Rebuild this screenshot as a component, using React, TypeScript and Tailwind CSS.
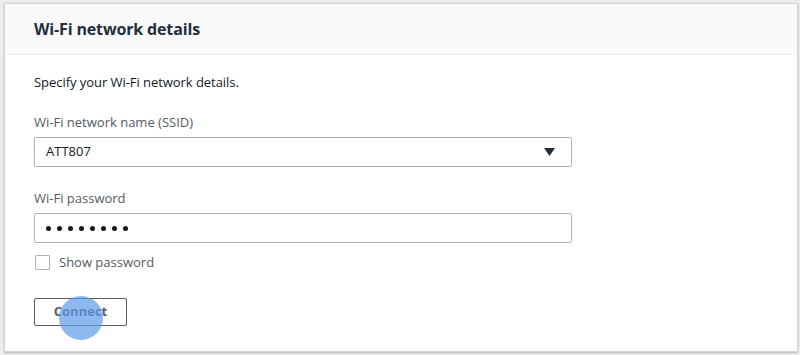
import React from "react";

export default function App() {
  return (
    <div
      className="w-[800px] h-[355px] bg-[#eeeeee] pt-[3px] pl-[4px] pr-[2px]"
      style={{ fontFamily: '"Open Sans", "Noto Sans", sans-serif' }}
    >
      <div className="w-[794px] h-[349px] bg-white border border-[#d5d5d5] shadow-[0_1px_2px_rgba(0,0,0,0.25)] flex flex-col">
        <div className="h-[51px] bg-[#fafafa] border-b border-[#eaeded] flex items-center pl-[29px]">
          <span className="text-[16px] font-bold text-[#232f3e] tracking-[-0.15px]">Wi-Fi network details</span>
        </div>
        <div className="pl-[29px] pt-[17px] flex flex-col text-[#16191f]">
          <p className="text-[13px] leading-[20px] tracking-[-0.05px]">Specify your Wi-Fi network details.</p>
          <label className="mt-[20px] text-[13px] leading-[20px] text-[#545b64]">Wi-Fi network name (SSID)</label>
          <div className="mt-[5px] w-[538px] h-[30px] border border-[#aab7b8] rounded-[2px] flex items-center justify-between pl-[11px] pr-[16px]">
            <span className="text-[13px] text-[#16191f]">ATT807</span>
            <svg width="11" height="8" viewBox="0 0 11 8">
              <path d="M0 0 L11 0 L5.5 8 Z" fill="#232f3e" />
            </svg>
          </div>
          <label className="mt-[21px] text-[13px] leading-[20px] text-[#545b64]">Wi-Fi password</label>
          <div className="mt-[5px] w-[538px] h-[30px] border border-[#aab7b8] rounded-[2px] flex items-center pl-[11px] gap-[6px]">
            {Array.from({ length: 8 }).map((_, i) => (
              <span key={i} className="w-[5px] h-[5px] rounded-full bg-[#16191f]" />
            ))}
          </div>
          <div className="mt-[10px] flex items-center gap-[9px]">
            <span className="w-[15px] h-[15px] border border-[#aab7b8] rounded-[1px] bg-white ml-[1px]" />
            <span className="text-[13px] text-[#545b64]">Show password</span>
          </div>
          <div className="mt-[25px] relative w-[93px] h-[28px]">
            <button className="w-[93px] h-[28px] border border-[#545b64] rounded-[2px] bg-white text-[13px] font-bold text-[#545b64] flex items-center justify-center">
              Connect
            </button>
            <span className="absolute left-[25px] top-[-2px] w-[44px] h-[44px] rounded-full bg-[#5b9bea] opacity-70" />
          </div>
        </div>
      </div>
    </div>
  );
}
